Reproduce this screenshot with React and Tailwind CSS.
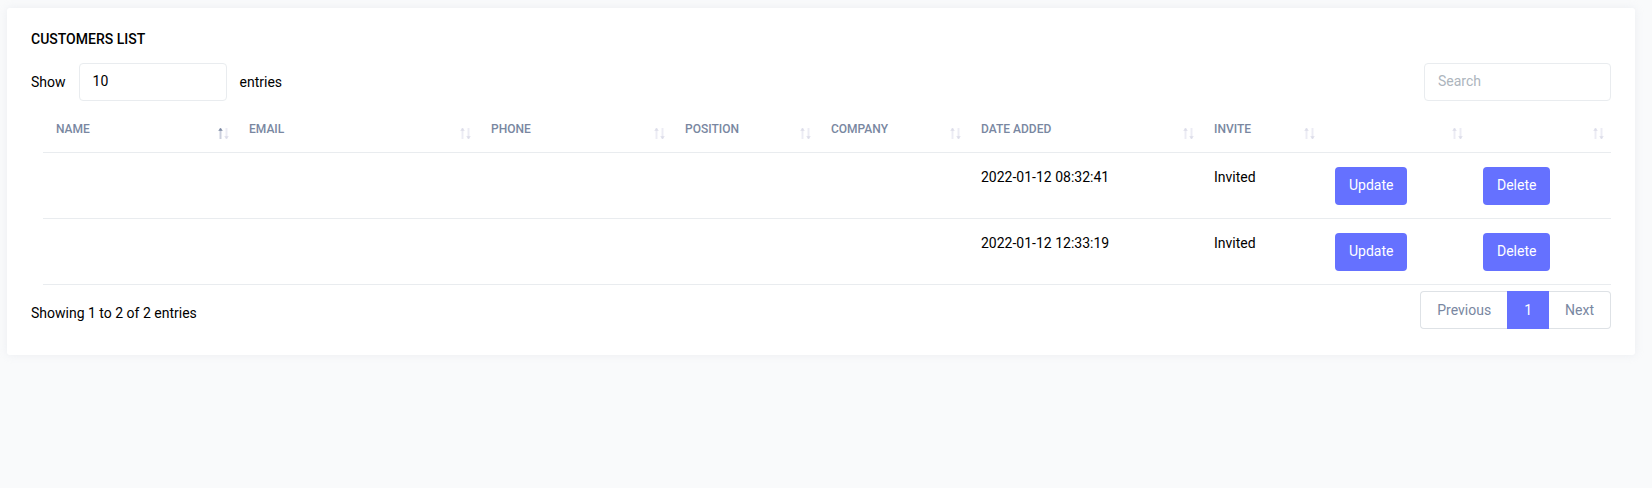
const columns = [
  { key: 'name', label: 'Name', width: 'w-[193px]' },
  { key: 'email', label: 'Email', width: 'w-[242px]' },
  { key: 'phone', label: 'Phone', width: 'w-[194px]' },
  { key: 'position', label: 'Position', width: 'w-[146px]' },
  { key: 'company', label: 'Company', width: 'w-[150px]' },
  { key: 'added', label: 'Date Added', width: 'w-[233px]' },
  { key: 'invite', label: 'Invite', width: 'w-[121px]' },
  { key: 'update', label: '', width: 'w-[148px]' },
  { key: 'delete', label: '', width: 'w-[141px]' },
];

const customers = [
  { id: 1, name: '', email: '', phone: '', position: '', company: '', added: '2022-01-12 08:32:41', invite: 'Invited' },
  { id: 2, name: '', email: '', phone: '', position: '', company: '', added: '2022-01-12 12:33:19', invite: 'Invited' },
];

function SortIcon({ ascending }) {
  return (
    <svg viewBox="0 0 11 11" className="mt-2 h-[11px] w-[11px] shrink-0" aria-hidden="true">
      <path className={ascending ? 'fill-[#ccd0de]' : 'fill-[#ececf4]'} d="M1.5 0h2v11h-2z" />
      <path className={ascending ? 'fill-[#7987a1]' : 'fill-[#dcdde9]'} d="M2.5 0 4.8 2.7H.2z" />
      <path className="fill-[#ececf4]" d="M7.5 0h2v11h-2z" />
      <path className="fill-[#dcdde9]" d="M8.5 11 10.8 8.3H6.2z" />
    </svg>
  );
}

function ActionButton({ children }) {
  return (
    <button type="button" className="block h-[38px] rounded bg-[#6571ff] px-3.5 pb-0.5 text-sm text-white">
      {children}
    </button>
  );
}

function Cell({ children }) {
  return <td className="border-b border-[#e9ecef] px-[13px] pt-3.5 pb-[13px] align-top">{children}</td>;
}

export default function App() {
  return (
    <div className="min-h-screen bg-[#f9fafb] pt-2 pr-[17px] pl-[7px] font-[Roboto,sans-serif] text-sm leading-[21px] text-black">
      <main className="rounded-[3px] bg-white p-6 pb-[26px] shadow-[0_0_10px_0_rgba(183,192,206,0.2)]">
        <h1 className="mb-[17px] leading-[14px] font-medium uppercase">Customers List</h1>

        <div className="flex flex-wrap items-center justify-between gap-y-2">
          <label className="flex items-center gap-[13px]">
            Show
            <select className="h-[38px] w-[148px] appearance-none rounded border border-[#e9ecef] bg-white px-[13px] pb-0.5">
              <option>10</option>
              <option>30</option>
              <option>50</option>
              <option>All</option>
            </select>
            entries
          </label>
          <input
            type="search"
            aria-label="Search"
            placeholder="Search"
            className="h-[38px] w-[187px] rounded border border-[#e9ecef] bg-white px-[13px] pb-0.5 placeholder:text-[#adb5bd]"
          />
        </div>

        <div className="mt-1.5 overflow-x-auto pl-3">
          <table className="w-full table-fixed border-separate border-spacing-0 text-left">
            <thead>
              <tr>
                {columns.map((column, index) => (
                  <th
                    key={column.key}
                    aria-sort={index === 0 ? 'ascending' : undefined}
                    className={`${column.width} border-b border-[#e9ecef] pt-[13px] pr-[7px] pb-3.5 pl-[13px] text-xs leading-[18px] font-medium text-[#7987a1]`}
                  >
                    <button
                      type="button"
                      aria-label={`Sort by ${column.label || column.key}`}
                      className="flex h-[18px] w-full items-start justify-between uppercase"
                    >
                      <span>{column.label}</span>
                      <SortIcon ascending={index === 0} />
                    </button>
                  </th>
                ))}
              </tr>
            </thead>
            <tbody>
              {customers.map((customer) => (
                <tr key={customer.id}>
                  <Cell>{customer.name}</Cell>
                  <Cell>{customer.email}</Cell>
                  <Cell>{customer.phone}</Cell>
                  <Cell>{customer.position}</Cell>
                  <Cell>{customer.company}</Cell>
                  <Cell>{customer.added}</Cell>
                  <Cell>{customer.invite}</Cell>
                  <Cell>
                    <ActionButton>Update</ActionButton>
                  </Cell>
                  <Cell>
                    <ActionButton>Delete</ActionButton>
                  </Cell>
                </tr>
              ))}
            </tbody>
          </table>
        </div>

        <div className="mt-1.5 flex flex-wrap items-center justify-between">
          <p className="pt-1.5">Showing 1 to 2 of 2 entries</p>
          <nav aria-label="Pagination" className="flex h-[38px] text-[#7987a1]">
            <a href="#previous" className="flex items-center rounded-l border border-r-0 border-[#dee2e6] px-4">
              Previous
            </a>
            <a href="#page-1" aria-current="page" className="flex items-center bg-[#6571ff] px-[17px] text-white">
              1
            </a>
            <a href="#next" className="flex items-center rounded-r border border-l-0 border-[#dee2e6] px-4">
              Next
            </a>
          </nav>
        </div>
      </main>
    </div>
  );
}
